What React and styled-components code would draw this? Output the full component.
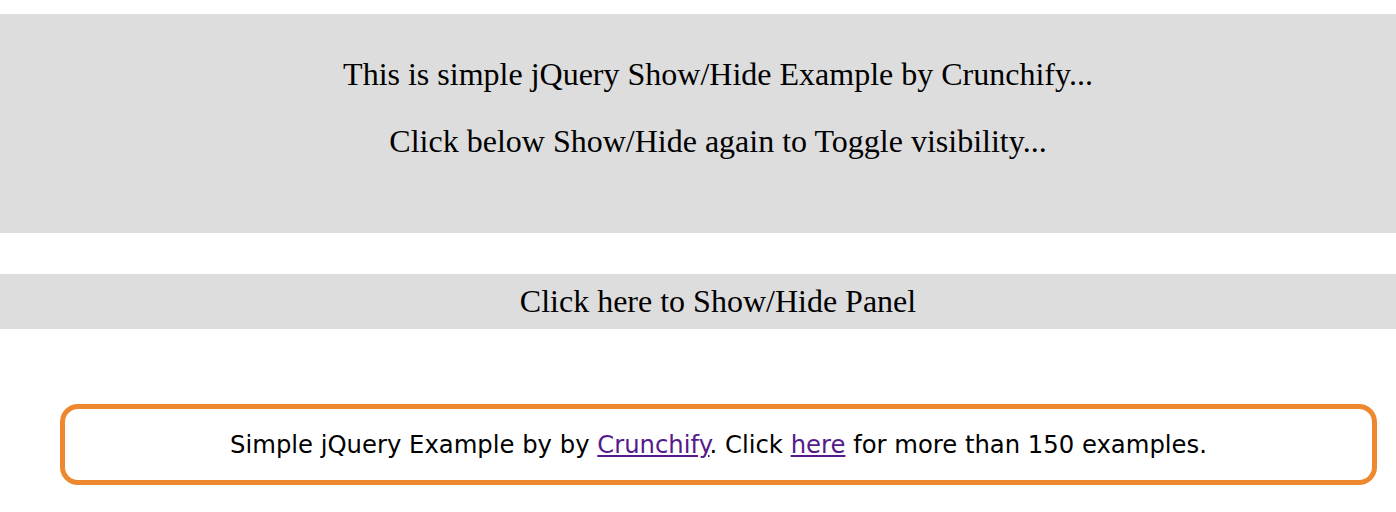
import React, { useState } from "react";
import styled, { createGlobalStyle } from "styled-components";

const GlobalStyle = createGlobalStyle`
  body {
    margin: 0;
    background: #fff;
    font-family: "Liberation Serif", "Times New Roman", serif;
  }
`;

const Page = styled.div`
  padding-top: 14px;
`;

const Panel = styled.div`
  background: #dddddd;
  height: 219px;
  box-sizing: border-box;
  padding: 42px 0 0 40px;
  display: flex;
  flex-direction: column;
  align-items: center;
  gap: 31px;
  font-size: 32px;
  line-height: 36px;
  color: #000;
`;

const Line = styled.p`
  margin: 0;
  text-align: center;
`;

const Flip = styled.div`
  margin-top: 41px;
  padding-left: 40px;
  height: 55px;
  line-height: 55px;
  background: #dddddd;
  text-align: center;
  font-size: 32px;
  color: #000;
  cursor: pointer;
`;

const Footer = styled.div`
  margin: 75px 19px 0 60px;
  height: 81px;
  box-sizing: border-box;
  border: 5px solid #ee882e;
  border-radius: 18px;
  display: flex;
  align-items: center;
  justify-content: center;
  font-family: "DejaVu Sans", Verdana, sans-serif;
  font-size: 24.3px;
  color: #000;
`;

const Link = styled.a`
  color: #551a8b;
  text-decoration: underline;
`;

export default function App() {
  const [open, setOpen] = useState(true);
  return (
    <Page>
      <GlobalStyle />
      <Panel style={{ visibility: open ? "visible" : "hidden" }}>
        <Line>This is simple jQuery Show/Hide Example by Crunchify...</Line>
        <Line>Click below Show/Hide again to Toggle visibility...</Line>
      </Panel>
      <Flip onClick={() => setOpen(!open)}>Click here to Show/Hide Panel</Flip>
      <Footer>
        <span>
          Simple jQuery Example by by <Link href="#">Crunchify</Link>. Click{" "}
          <Link href="#">here</Link> for more than 150 examples.
        </span>
      </Footer>
    </Page>
  );
}
